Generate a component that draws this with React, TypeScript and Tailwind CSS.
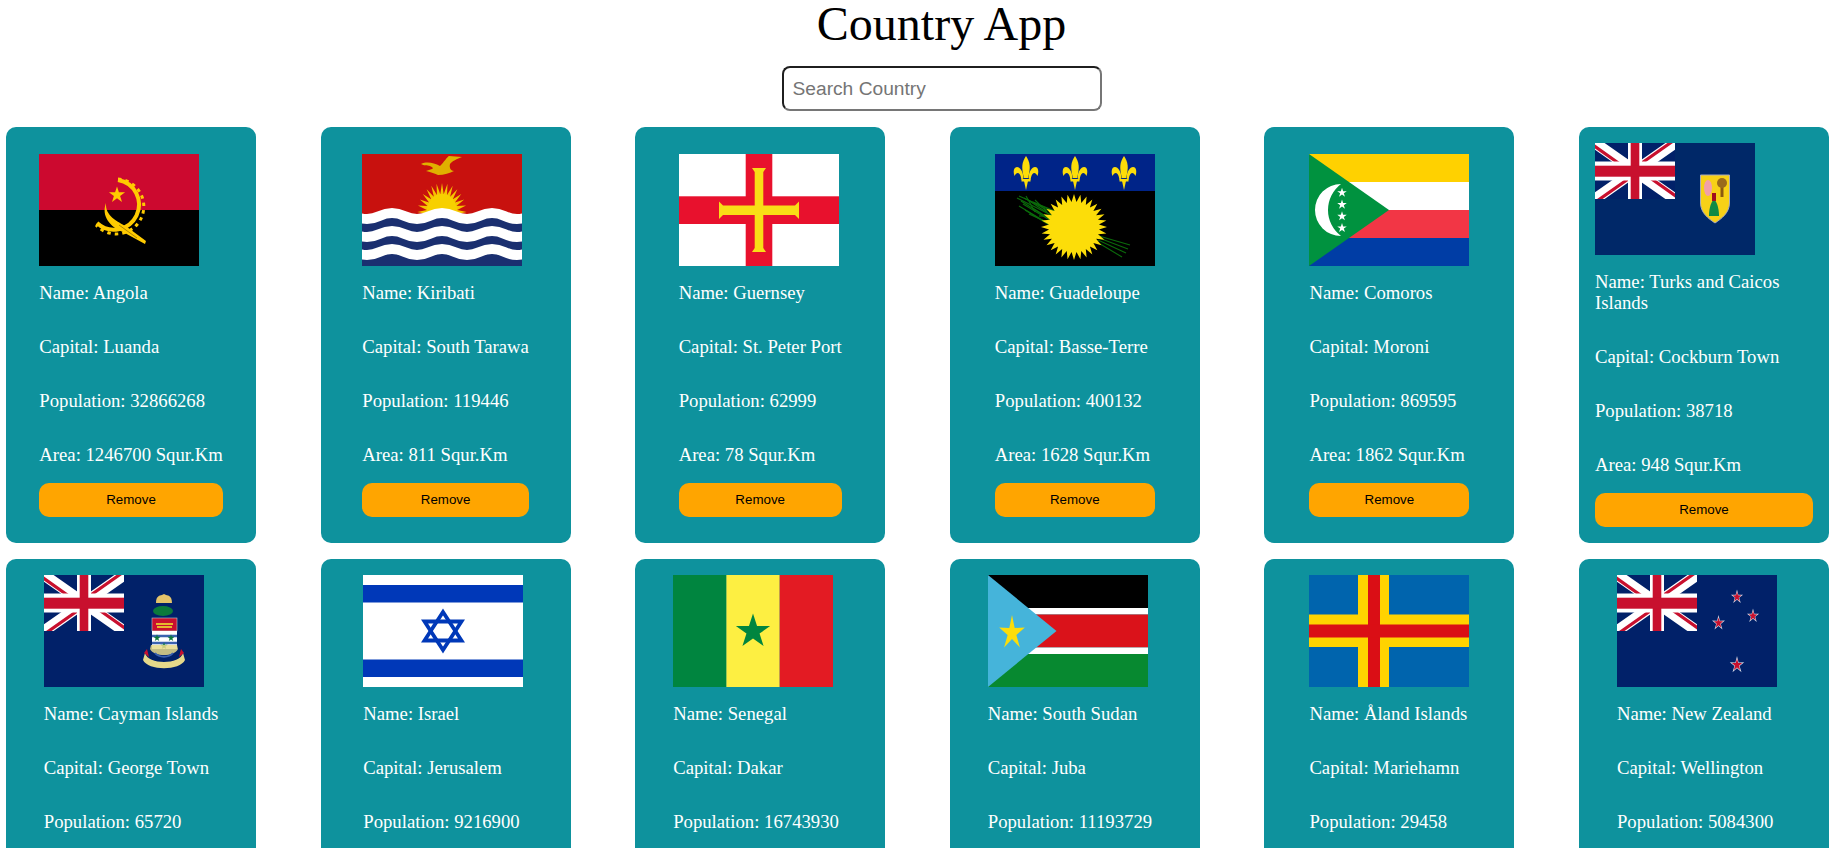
import React from 'react';

type Country = {
  name: string;
  capital: string;
  population: number;
  area: number;
  flag: React.ReactNode;
};

// n-pointed star around cx, cy. Rotated so that the first point looks up
const starPoints = (cx: number, cy: number, r: number, ratio = 0.382, n = 5) => {
  const pts: string[] = [];
  for (let i = 0; i < n * 2; i++) {
    const radius = i % 2 === 0 ? r : r * ratio;
    const a = (Math.PI * i) / n - Math.PI / 2;
    pts.push(`${(cx + radius * Math.cos(a)).toFixed(2)},${(cy + radius * Math.sin(a)).toFixed(2)}`);
  }
  return pts.join(' ');
};

const FlagSvg = ({ children }: { children: React.ReactNode }) => (
  <svg viewBox="0 0 160 112" className="block h-[112px] w-[160px] shrink-0">
    {children}
  </svg>
);

// nested svg so the diagonals get clipped at the canton edge
const UnionJack = () => (
  <svg x="0" y="0" width="80" height="56" viewBox="0 0 80 56">
    <rect x="0" y="0" width="80" height="56" fill="#012169" />
    <path d="M0 0L80 56M80 0L0 56" stroke="#fff" strokeWidth="11" />
    <path d="M-2 2L36 29M82 54L44 27M78 -2L44 22M2 58L36 34" stroke="#C8102E" strokeWidth="3.2" />
    <rect x="33" y="0" width="14" height="56" fill="#fff" />
    <rect x="0" y="18.5" width="80" height="19" fill="#fff" />
    <rect x="35.7" y="0" width="8.6" height="56" fill="#C8102E" />
    <rect x="0" y="22.7" width="80" height="11" fill="#C8102E" />
  </svg>
);

const Angola = () => (
  <FlagSvg>
    <rect width="160" height="56" fill="#CC092F" />
    <rect y="56" width="160" height="56" fill="#000" />
    <polygon points={starPoints(78, 41, 8.5)} fill="#FFCB00" />
    <path d="M79 26A25 25 0 1 1 58 69" fill="none" stroke="#FFCB00" strokeWidth="4" />
    <path d="M79 25A27.5 27.5 0 1 1 57 71" fill="none" stroke="#FFCB00" strokeWidth="3" strokeDasharray="3.5 4" />
    <path d="M67 49C66 62 78 67 88 73L107 87L106 90L84 78C71 73 62 62 67 49Z" fill="#FFCB00" />
    <path d="M80 71L98 84" stroke="#7a5c00" strokeWidth="0.6" />
  </FlagSvg>
);

const Kiribati = () => (
  <FlagSvg>
    <rect width="160" height="62" fill="#C8110E" />
    <g transform="translate(80 58) scale(0.85 1)">
      <polygon points={starPoints(0, 0, 29, 0.62, 28)} fill="#F5C400" />
      <circle r="18" fill="#F7D000" />
    </g>
    <path d="M59 10C65 7 72 9 78 12C82 8 85 3 87 2L100 3C95 5 90 7 88 10C87 14 89 17 92 17C88 19 82 21 76 21C72 19 68 18 64 17L70 15C72 14 70 13 68 12C65 11 62 12 59 10Z" fill="#E0B000" />
    <rect y="62" width="160" height="50" fill="#1A2F70" />
    {[62, 80, 98].map(y => (
      <path
        key={y}
        d={`M-32.5 ${y}Q-20 ${y - 6} -7.5 ${y}T17.5 ${y}T42.5 ${y}T67.5 ${y}T92.5 ${y}T117.5 ${y}T142.5 ${y}T167.5 ${y}`}
        fill="none"
        stroke="#fff"
        strokeWidth="10"
      />
    ))}
  </FlagSvg>
);

const Guernsey = () => (
  <FlagSvg>
    <rect width="160" height="112" fill="#fff" />
    <rect x="66.7" width="26.6" height="112" fill="#E8112D" />
    <rect y="42.3" width="160" height="27.7" fill="#E8112D" />
    <path d="M73 14H87L84.3 18V51.5H116L120 47.5V65L116 61H84.3V94L87 98H73L75.7 94V61H44L40 65V47.5L44 51.5H75.7V18Z" fill="#F9DD16" />
  </FlagSvg>
);

const Fleur = ({ x }: { x: number }) => (
  <g transform={`translate(${x} 19)`} fill="#FCDD09">
    <path d="M0 -17C4 -11 5 -6 2 5H-2C-5 -6 -4 -11 0 -17Z" />
    <path d="M2.5 5C3 -2 6 -6 9 -6C12.5 -6 13 -1 11.5 3C10 0 8 -1 6.5 1C5 3 5 5 4.5 7Z" />
    <path d="M-2.5 5C-3 -2 -6 -6 -9 -6C-12.5 -6 -13 -1 -11.5 3C-10 0 -8 -1 -6.5 1C-5 3 -5 5 -4.5 7Z" />
    <rect x="-4.5" y="6" width="9" height="2.5" />
    <path d="M-2 8L0 17L2 8Z" />
  </g>
);

const caneLeaves = [
  [22, 44, 58, 62],
  [24, 42, 60, 58],
  [26, 47, 56, 66],
  [29, 44, 60, 60],
  [24, 52, 54, 70],
  [33, 46, 60, 64],
  [28, 50, 58, 68],
  [30, 56, 56, 72],
  [36, 53, 60, 68],
  [38, 48, 62, 58],
  [34, 60, 56, 70],
  [44, 62, 54, 62],
  [40, 46, 52, 58],
  [31, 42, 40, 58],
  [104, 82, 135, 91],
  [104, 84, 133, 95],
  [103, 86, 131, 99],
  [102, 88, 127, 103],
];

const Guadeloupe = () => (
  <FlagSvg>
    <rect width="160" height="112" fill="#000" />
    <rect width="160" height="37" fill="#002488" />
    <Fleur x={31} />
    <Fleur x={80} />
    <Fleur x={129} />
    <g stroke="#0B6B0B" strokeWidth="1.1">
      {caneLeaves.map(([x1, y1, x2, y2], i) => (
        <line key={i} x1={x1} y1={y1} x2={x2} y2={y2} />
      ))}
    </g>
    <polygon points={starPoints(79, 73, 33, 0.76, 32)} fill="#FCDD09" />
  </FlagSvg>
);

const Comoros = () => (
  <FlagSvg>
    <rect width="160" height="28" fill="#FFD100" />
    <rect y="28" width="160" height="28" fill="#fff" />
    <rect y="56" width="160" height="28" fill="#F23645" />
    <rect y="84" width="160" height="28" fill="#003DA5" />
    <polygon points="0,0 80,56 0,112" fill="#00923F" />
    <path d="M32 30A26 26 0 0 0 32 82A32.5 32.5 0 0 1 32 30Z" fill="#fff" />
    {[38.7, 50.6, 62.3, 74].map(y => (
      <polygon key={y} points={starPoints(33, y, 5)} fill="#fff" />
    ))}
  </FlagSvg>
);

const Turks = () => (
  <FlagSvg>
    <rect width="160" height="112" fill="#002868" />
    <UnionJack />
    <path d="M105.5 32H134.5V60C134.5 70 126 76 120 80C114 76 105.5 70 105.5 60Z" fill="#F7D117" stroke="#aab" strokeWidth="1" />
    <ellipse cx="113" cy="45" rx="4" ry="8" fill="#F2A0A8" />
    <path d="M127 36V54" stroke="#8B5A10" strokeWidth="3" />
    <circle cx="127" cy="40" r="5" fill="#9A6A1C" />
    <path d="M119 56C115 60 114 68 114 73H124C124 68 123 60 119 56Z" fill="#0E8A45" />
    <rect x="117" y="50" width="4" height="8" fill="#A00F1F" />
  </FlagSvg>
);

const Cayman = () => (
  <FlagSvg>
    <rect width="160" height="112" fill="#012169" />
    <UnionJack />
    <path d="M112 28C112 20 116 21 120 19C124 21 128 20 128 28Z" fill="#E4C46A" />
    <ellipse cx="119" cy="36" rx="10" ry="5" fill="#0B7A3B" />
    <rect x="108" y="43" width="25" height="13" fill="#C8102E" stroke="#bcc" strokeWidth="0.6" />
    <path d="M112 49H129M113 52H128" stroke="#E6B82E" strokeWidth="2" />
    <rect x="108" y="56" width="25" height="18" fill="#fff" />
    <path d="M108 61H133M108 68H133" stroke="#3B62B0" strokeWidth="2.4" />
    <polygon points={starPoints(113, 63, 3.8)} fill="#0B7A3B" />
    <polygon points={starPoints(127, 63, 3.8)} fill="#0B7A3B" />
    <polygon points={starPoints(120, 71, 3.8)} fill="#0B7A3B" />
    <path d="M101 78C104 90 136 90 139 78L141 85C136 96 104 96 99 85Z" fill="#E6D98A" />
    <path d="M100 78L103 74L105 82ZM140 78L137 74L135 82Z" fill="#C8102E" />
    <path d="M106 74C110 82 130 82 134 74L133 70H107Z" fill="#E6D98A" opacity="0.85" />
    <path d="M111 78C115 83 125 83 129 78" fill="none" stroke="#3B62B0" strokeWidth="2" />
  </FlagSvg>
);

const Israel = () => (
  <FlagSvg>
    <rect width="160" height="112" fill="#fff" />
    <rect y="10" width="160" height="17.5" fill="#0038B8" />
    <rect y="84.5" width="160" height="17.5" fill="#0038B8" />
    <g fill="none" stroke="#0038B8" strokeWidth="3.8">
      <polygon points="80,37 98.5,65.5 61.5,65.5" />
      <polygon points="80,75 98.5,46.5 61.5,46.5" />
    </g>
  </FlagSvg>
);

const Senegal = () => (
  <FlagSvg>
    <rect width="53.4" height="112" fill="#00853F" />
    <rect x="53.4" width="53.3" height="112" fill="#FDEF42" />
    <rect x="106.7" width="53.3" height="112" fill="#E31B23" />
    <polygon points={starPoints(80, 56.5, 18)} fill="#00853F" />
  </FlagSvg>
);

const SouthSudan = () => (
  <FlagSvg>
    <rect width="160" height="33" fill="#000" />
    <rect y="33" width="160" height="6.5" fill="#fff" />
    <rect y="39.5" width="160" height="33" fill="#DA121A" />
    <rect y="72.5" width="160" height="6.5" fill="#fff" />
    <rect y="79" width="160" height="33" fill="#078930" />
    <polygon points="0,0 68.5,56 0,112" fill="#45B4DA" />
    <g transform="translate(24 58) scale(0.75 1)">
      <polygon points={starPoints(0, 0, 18, 0.34)} fill="#FCDD09" />
    </g>
  </FlagSvg>
);

const Aland = () => (
  <FlagSvg>
    <rect width="160" height="112" fill="#0064AD" />
    <rect x="49" width="31" height="112" fill="#FFD300" />
    <rect y="39.5" width="160" height="32.5" fill="#FFD300" />
    <rect x="59" width="12" height="112" fill="#DA0E15" />
    <rect y="49.5" width="160" height="13" fill="#DA0E15" />
  </FlagSvg>
);

const NzStar = ({ x, y, r }: { x: number; y: number; r: number }) => (
  <g transform={`translate(${x} ${y}) scale(0.85 1)`}>
    <polygon points={starPoints(0, 0, r, 0.36)} fill="#d9dbe6" />
    <polygon points={starPoints(0, 0, r * 0.7, 0.4)} fill="#C8102E" />
  </g>
);

const NewZealand = () => (
  <FlagSvg>
    <rect width="160" height="112" fill="#012169" />
    <UnionJack />
    <NzStar x={120} y={22} r={7.5} />
    <NzStar x={136} y={41} r={7.5} />
    <NzStar x={101.5} y={48} r={8} />
    <NzStar x={120} y={90} r={9} />
  </FlagSvg>
);

const countries: Country[] = [
  { name: 'Angola', capital: 'Luanda', population: 32866268, area: 1246700, flag: <Angola /> },
  { name: 'Kiribati', capital: 'South Tarawa', population: 119446, area: 811, flag: <Kiribati /> },
  { name: 'Guernsey', capital: 'St. Peter Port', population: 62999, area: 78, flag: <Guernsey /> },
  { name: 'Guadeloupe', capital: 'Basse-Terre', population: 400132, area: 1628, flag: <Guadeloupe /> },
  { name: 'Comoros', capital: 'Moroni', population: 869595, area: 1862, flag: <Comoros /> },
  { name: 'Turks and Caicos Islands', capital: 'Cockburn Town', population: 38718, area: 948, flag: <Turks /> },
  { name: 'Cayman Islands', capital: 'George Town', population: 65720, area: 264, flag: <Cayman /> },
  { name: 'Israel', capital: 'Jerusalem', population: 9216900, area: 20770, flag: <Israel /> },
  { name: 'Senegal', capital: 'Dakar', population: 16743930, area: 196722, flag: <Senegal /> },
  { name: 'South Sudan', capital: 'Juba', population: 11193729, area: 619745, flag: <SouthSudan /> },
  { name: 'Åland Islands', capital: 'Mariehamn', population: 29458, area: 1580, flag: <Aland /> },
  { name: 'New Zealand', capital: 'Wellington', population: 5084300, area: 270467, flag: <NewZealand /> },
];

const CountryCard = ({ country }: { country: Country }) => (
  <div className="flex w-[250px] flex-col items-center justify-center rounded-[10px] bg-[#0e929d] p-4 text-white">
    <div className="flex w-fit flex-col">
      {country.flag}
      <div className="mt-[16px] flex flex-col gap-[33px] text-[18.72px] leading-[21px]">
        <p>Name: {country.name}</p>
        <p>Capital: {country.capital}</p>
        <p>Population: {country.population}</p>
        <p>Area: {country.area} Squr.Km</p>
      </div>
      <button className="mt-[18px] h-[34px] w-full rounded-[10px] bg-[#ffa500] font-['Liberation_Sans',sans-serif] text-[13.33px] text-black">
        Remove
      </button>
    </div>
  </div>
);

export default function App() {
  return (
    <div className="h-screen overflow-hidden bg-white font-['Liberation_Serif',serif] text-black">
      <div className="pl-[42px]">
        <h1 className="text-center text-[48px] leading-[47px] font-normal">Country App</h1>
        <div className="mt-[19px] flex justify-center">
          <input
            type="text"
            placeholder="Search Country"
            className="h-[45px] w-[320px] rounded-[8px] border-2 border-t-[#1f1f1f] border-r-[#767676] border-b-[#767676] border-l-[#1f1f1f] px-[9px] font-['Liberation_Sans',sans-serif] text-[19.2px] placeholder:text-[#757575]"
          />
        </div>
      </div>
      <div className="mt-[16px] grid grid-cols-[repeat(6,250px)] gap-x-[64.6px] gap-y-[16px] pl-[6px]">
        {countries.map(country => (
          <CountryCard key={country.name} country={country} />
        ))}
      </div>
    </div>
  );
}
